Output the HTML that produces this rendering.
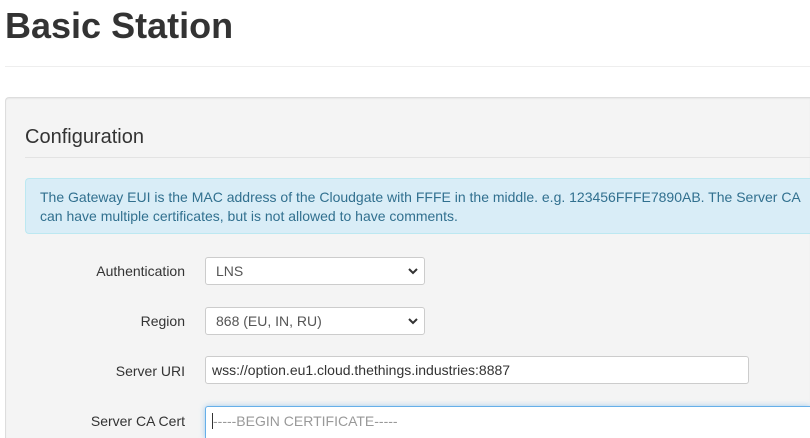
<!DOCTYPE html>
<html style="width:810px;height:438px;overflow:hidden"><head><style>
body{margin:0;width:810px;height:438px;overflow:hidden;background:#fff;font-family:"Liberation Sans",Arial,sans-serif;color:#333;position:relative}
h1{position:absolute;left:5px;top:3px;margin:0;font-size:36px;font-weight:bold;color:#333;line-height:46px}
.hr1{position:absolute;left:5px;right:0;top:66px;border-top:1px solid #eee}
.panel{position:absolute;left:5px;top:97px;width:804px;height:345px;background:#f4f4f4;border:1px solid #ddd;border-right:0;border-bottom:0;border-radius:4px 0 0 0;box-shadow:inset 0 1px 1px rgba(0,0,0,.05)}
h3{position:absolute;left:25px;top:124px;margin:0;font-size:20px;font-weight:normal;line-height:26px}
.hr2{position:absolute;left:25px;right:0;top:157px;border-top:1px solid #e3e3e3}
.alert{position:absolute;left:25px;top:178px;width:785px;height:56px;box-sizing:border-box;background:#d9edf7;border:1px solid #bce8f1;border-right:0;border-radius:4px 0 0 4px;color:#31708f;font-size:14px;line-height:19px;padding:9px 14px;white-space:nowrap}
.lbl{position:absolute;right:625px;font-size:14px;color:#333}
.ctl{position:absolute;left:205px;height:28px;box-sizing:border-box;background:#fff;border:1px solid #ccc;border-radius:3px;font-size:14px;line-height:26px;padding:0 10px;color:#555}
.ctl svg{position:absolute;right:6px;top:10px}
</style></head><body>
<h1>Basic Station</h1>
<div class="hr1"></div>
<div class="panel"></div>
<h3>Configuration</h3>
<div class="hr2"></div>
<div class="alert">The Gateway EUI is the MAC address of the Cloudgate with FFFE in the middle. e.g. 123456FFFE7890AB. The Server CA<br>can have multiple certificates, but is not allowed to have comments.</div>
<div class="lbl" style="top:263px">Authentication</div>
<div class="ctl" style="top:257px;width:220px">LNS<svg width="10" height="7" viewBox="0 0 10 7"><path d="M1 1l4 4 4-4" stroke="#333" stroke-width="2" fill="none"/></svg></div>
<div class="lbl" style="top:313px">Region</div>
<div class="ctl" style="top:307px;width:220px">868 (EU, IN, RU)<svg width="10" height="7" viewBox="0 0 10 7"><path d="M1 1l4 4 4-4" stroke="#333" stroke-width="2" fill="none"/></svg></div>
<div class="lbl" style="top:363px">Server URI</div>
<div class="ctl" style="top:356px;width:544px;padding-left:6px;color:#333">wss://option.eu1.cloud.thethings.industries:8887</div>
<div class="lbl" style="top:413px">Server CA Cert</div>
<div class="ctl" style="top:406px;width:605px;height:32px;padding-left:6px;padding-top:1px;border-color:#66afe9;border-right:0;border-bottom:0;border-radius:3px 0 0 0;box-shadow:0 0 6px rgba(102,175,233,.6);color:#999"><span style="border-left:1px solid #333"></span>-----BEGIN CERTIFICATE-----</div>
</body></html>
